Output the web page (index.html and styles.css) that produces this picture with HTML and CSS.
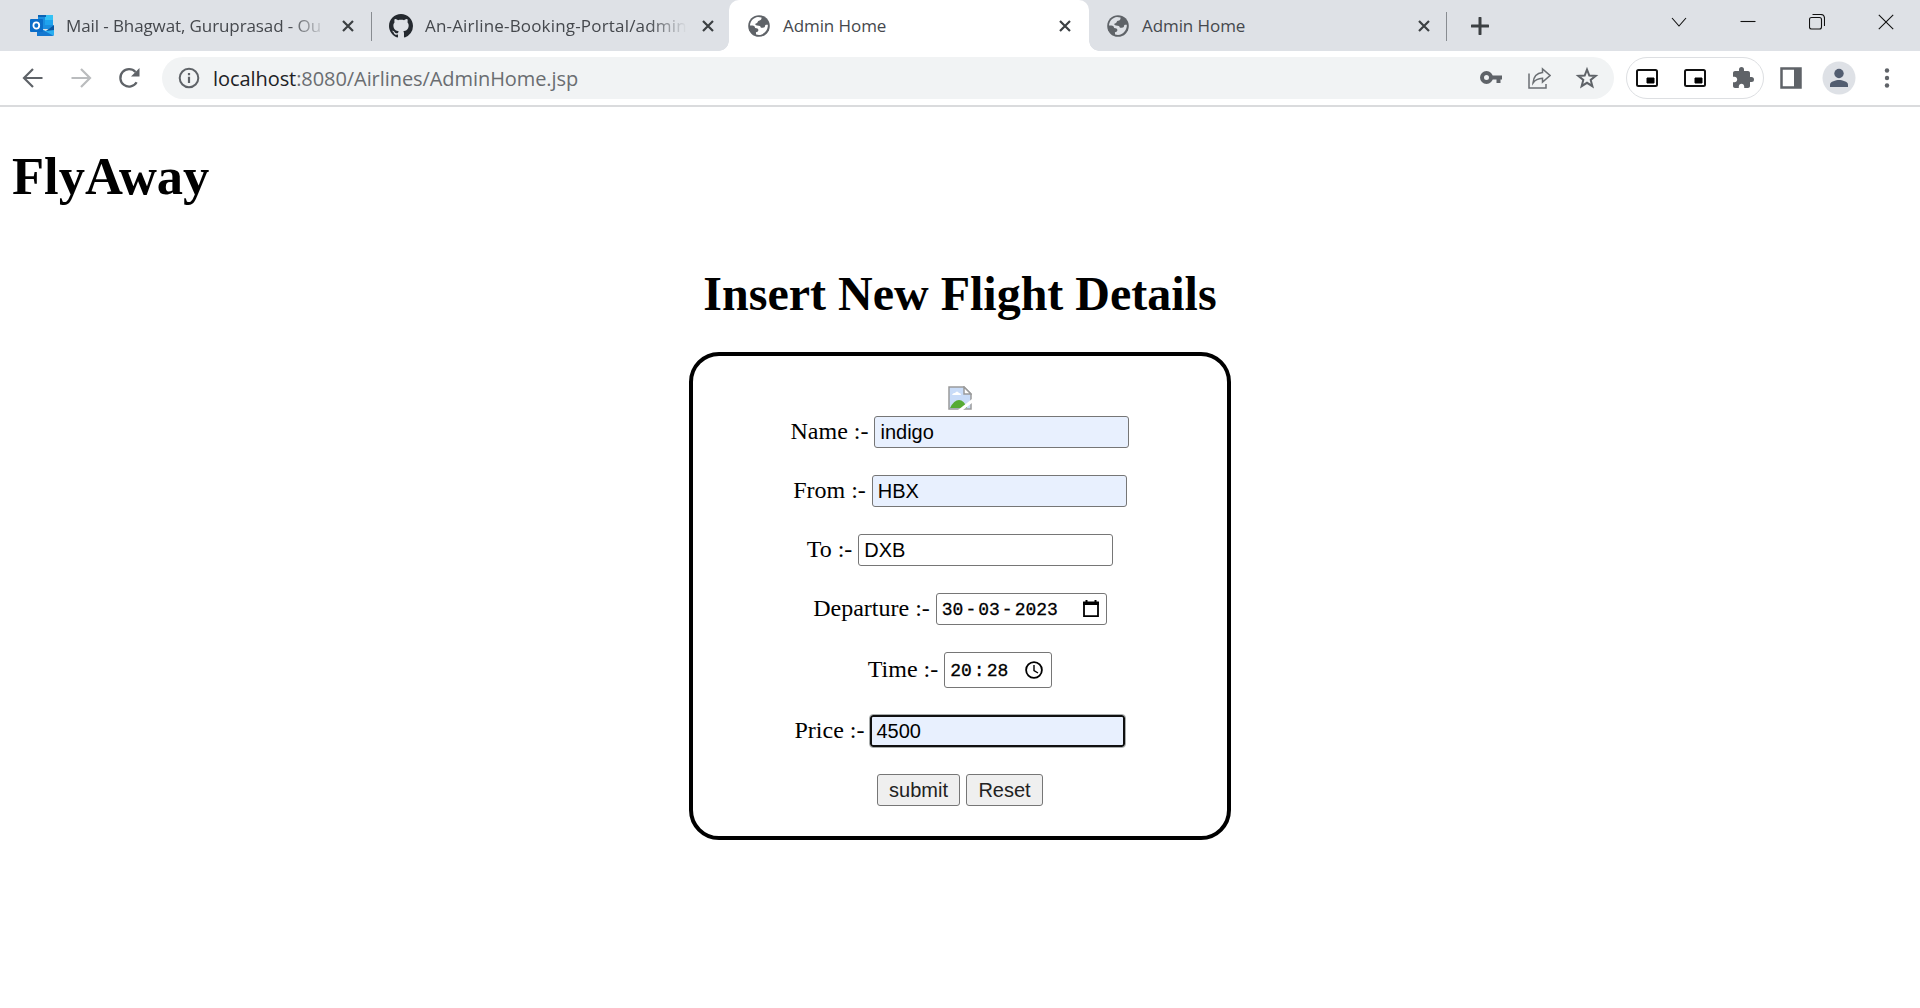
FILE: index.html
```
<!DOCTYPE html>
<html lang="en">
<head>
<meta charset="utf-8">
<title>Admin Home</title>
<link rel="stylesheet" href="styles.css">
</head>
<body>
<svg width="0" height="0" class="defs">
  <symbol id="x" viewBox="0 0 12 12"><path d="M1 1l10 10M11 1L1 11" stroke="#3c4043" stroke-width="2.2" fill="none"/></symbol>
  <symbol id="globe" viewBox="0 0 24 24"><circle cx="12" cy="12" r="10.800" fill="#5f6368"/><path d="M3 11.500C3.200 7.500 6.500 3.500 11 3.100l3.500.3c.3 2-.6 3-2.500 3.300-1.300.2-1.300 1.500-2 2.300-.6.700-1.700.4-1.700 1.300 0 .8.7 1.100 1.700 1.100 2.600 0 3.700.7 3.900 2.300h2c1.300 0 2.200-.8 2.200-2 0-.9 1-1.200 2.700-.9.500 4.800-3.500 10-8.800 10.200-1 0-2-.1-2.900-.4l-.2-2.400c1.700-.2 2.500-1 2.500-2.200 0-1.500-1.400-2-3.200-2.100-.5-1.600-1.400-2.400-2.700-2.400z" fill="currentColor"/></symbol>
  <symbol id="pip" viewBox="0 0 24 24"><rect x="2" y="4" width="20" height="16" rx="1.500" fill="none" stroke="#111" stroke-width="2"/><path d="M12 12h7v5h-7z" fill="#000" stroke="#000"/></symbol>
</svg>
<header class="tabs">
  <div class="tab first">
    <svg width="24" height="24" viewBox="0 0 24 24"><path d="M8 1h15v14H8z" fill="#1a8ee0"/><path d="M15 1h8v5h-8z" fill="#34c2f5"/><path d="M8 1h8v2H8z" fill="#0b64b5"/><path d="M15 6h8v5h-8z" fill="#1fa3ee"/><path d="M7 13l9 4 8-6v10.500H7z" fill="#2aaef0"/><path d="M7 13l17 9H7z" fill="#1478d0"/><path d="M24 11v5l-8 1z" fill="#0b55a0"/><rect y="5" width="13" height="13" rx="1" fill="#0a6dc9"/><ellipse cx="6.300" cy="11.500" rx="2.900" ry="3.200" fill="none" stroke="#fff" stroke-width="1.800"/></svg>
    <span class="title fade">Mail - Bhagwat, Guruprasad - Ou</span>
    <svg class="close" width="12" height="12"><use href="#x"/></svg>
  </div>
  <div class="tab second">
    <svg width="24" height="24" viewBox="0 0 16 16"><path fill="#24292f" d="M8 0C3.580 0 0 3.580 0 8c0 3.540 2.290 6.530 5.470 7.590.4.070.55-.17.55-.38 0-.19-.01-.82-.01-1.490-2.010.37-2.530-.49-2.690-.94-.09-.23-.48-.94-.82-1.130-.28-.15-.68-.52-.01-.53.63-.01 1.080.58 1.230.82.72 1.210 1.870.87 2.330.66.070-.52.28-.87.51-1.070-1.780-.2-3.640-.89-3.640-3.950 0-.87.31-1.590.82-2.150-.08-.2-.36-1.020.080-2.120 0 0 .67-.21 2.200.82.64-.18 1.320-.27 2-.27s1.360.09 2 .27c1.530-1.040 2.200-.82 2.200-.82.44 1.100.16 1.920.08 2.120.51.56.82 1.270.82 2.150 0 3.070-1.870 3.750-3.650 3.950.29.25.54.73.54 1.480 0 1.070-.01 1.930-.01 2.200 0 .21.15.46.55.38A8.010 8.010 0 0 0 16 8c0-4.420-3.580-8-8-8z"/></svg>
    <span class="title fade">An-Airline-Booking-Portal/admin</span>
    <svg class="close" width="12" height="12"><use href="#x"/></svg>
  </div>
  <div class="tab active">
    <svg class="globe" width="24" height="24"><use href="#globe"/></svg>
    <span class="title">Admin Home</span>
    <svg class="close" width="12" height="12"><use href="#x"/></svg>
  </div>
  <div class="tab last">
    <svg class="globe" width="24" height="24"><use href="#globe"/></svg>
    <span class="title">Admin Home</span>
    <svg class="close" width="12" height="12"><use href="#x"/></svg>
  </div>
  <svg class="plus" width="18" height="18" viewBox="0 0 18 18"><path d="M9 1v16M1 9h16" stroke="#3c4043" stroke-width="3" stroke-linecap="round"/></svg>
  <div class="window">
    <svg width="16" height="16" viewBox="0 0 16 16"><path d="M1 4l7 8 7-8"/></svg>
    <svg width="16" height="16" viewBox="0 0 16 16"><path d="M.5 7.500h15"/></svg>
    <svg width="16" height="16" viewBox="0 0 16 16"><rect x=".5" y="3.500" width="12" height="11.500" rx="2"/><path d="M3.500 .5h8q4 0 4 4v7.500"/></svg>
    <svg width="16" height="16" viewBox="0 0 16 16"><path d="M.8 .8l14.400 14.400M15.200 .8L.8 15.200"/></svg>
  </div>
</header>
<nav class="toolbar">
  <span class="cell"><svg width="24" height="24" viewBox="0 0 24 24"><path d="M21.500 12H3.500M12 3l-9 9 9 9" fill="none" stroke="#5f6368" stroke-width="2.200"/></svg></span>
  <span class="cell"><svg width="24" height="24" viewBox="0 0 24 24"><path d="M2.500 12h18M12 3l9 9-9 9" fill="none" stroke="#babcbe" stroke-width="2.200"/></svg></span>
  <span class="cell"><svg width="24" height="24" viewBox="0 0 24 24"><path d="M19.600 16.200A8.700 8.700 0 1 1 18.500 6" fill="none" stroke="#5f6368" stroke-width="2.300"/><path d="M22.500 2v8.500H14z" fill="#5f6368"/></svg></span>
  <div class="omnibox">
    <span class="cell"><svg width="22" height="22" viewBox="0 0 22 22"><circle cx="11" cy="11" r="9.300" fill="none" stroke="#5f6368" stroke-width="2"/><path d="M11 9.700v6.300M11 6v2.200" stroke="#5f6368" stroke-width="2.200"/></svg></span>
    <span class="url"><b>localhost</b>:8080/Airlines/AdminHome.jsp</span>
    <span class="cell"><svg width="24" height="24" viewBox="0 0 24 24"><circle cx="7.500" cy="11.500" r="4.500" fill="none" stroke="#5f6368" stroke-width="4"/><path d="M12 9.500h11v4h-1.500v3.500h-4v-3.500H12z" fill="#5f6368"/></svg></span>
    <span class="cell"><svg width="24" height="24" viewBox="0 0 24 24" fill="none" stroke="#6b6f73" stroke-width="1.500"><path d="M2 7.500v14.500h17v-4"/><path d="M6 17C6.500 10.500 10 7 15.500 6.500V3L23 9.500l-7.500 6.500v-3.700C11 12.500 8 14 6 17z"/></svg></span>
    <span class="cell"><svg width="24" height="24" viewBox="0 0 24 24"><path d="M12 3.500l2.300 6 6.400.4-5 4 1.700 6.300L12 16.800l-5.400 3.400 1.700-6.300-5-4 6.400-.4z" fill="none" stroke="#5f6368" stroke-width="2"/></svg></span>
  </div>
  <div class="extensions">
    <svg width="24" height="24"><use href="#pip"/></svg>
    <svg width="24" height="24"><use href="#pip"/></svg>
    <svg width="24" height="24" viewBox="0 0 24 24"><path fill="#5f6368" d="M20.500 11H19V7c0-1.100-.9-2-2-2h-4V3.500a2.500 2.500 0 0 0-5 0V5H4c-1.100 0-1.990.9-1.990 2v3.800H3.500c1.490 0 2.700 1.210 2.700 2.700s-1.210 2.700-2.700 2.700H2V20c0 1.100.9 2 2 2h3.800v-1.500c0-1.490 1.210-2.700 2.700-2.700s2.700 1.210 2.700 2.700V22H17c1.100 0 2-.9 2-2v-4h1.500a2.500 2.500 0 0 0 0-5z"/></svg>
  </div>
  <span class="cell"><svg width="22" height="22" viewBox="0 0 22 22"><path d="M1.500 1.500h19v19h-19z" fill="none" stroke="#5f6368" stroke-width="2.500"/><path d="M14 1h7v20h-7z" fill="#5f6368"/></svg></span>
  <span class="cell"><svg width="34" height="34" viewBox="0 0 34 34"><circle cx="17" cy="17" r="16.500" fill="#dee1e6"/><circle cx="17" cy="12.500" r="4.700" fill="#525d70"/><path d="M8 26v-2.500c0-3 6-4.500 9-4.500s9 1.500 9 4.500V26z" fill="#525d70"/></svg></span>
  <span class="cell"><svg width="24" height="24" viewBox="0 0 24 24" fill="#5f6368"><circle cx="12" cy="4.500" r="2.200"/><circle cx="12" cy="12" r="2.200"/><circle cx="12" cy="19.500" r="2.200"/></svg></span>
</nav>
<main>
  <h1 class="brand">FlyAway</h1>
  <h2 class="heading">Insert New Flight Details</h2>
  <form class="card">
    <svg class="broken" width="24" height="24" viewBox="0 0 24 24"><path d="M1 1h15l7 7v15H1z" fill="#c9dcf8" stroke="#9a9a9a" stroke-width="1.500"/><path d="M4 9q1-2.500 3-2 2-3 4 0 2 0 2 2z" fill="#fff"/><path d="M2 22q4-8 9-8 5 0 8 8z" fill="#56ab35"/><path d="M16 1v7h7z" fill="#fff" stroke="#9a9a9a" stroke-width="1.500"/><path d="M24 13L10 24h5l9-7z" fill="#fff"/></svg>
    <div class="row"><label>Name :-</label><input class="field filled" value="indigo"></div>
    <div class="row"><label>From :-</label><input class="field filled" value="HBX"></div>
    <div class="row"><label>To :-</label><input class="field" value="DXB"></div>
    <div class="row"><label>Departure :-</label><span class="picker date"><span>30<i>-</i>03<i>-</i>2023</span><svg width="18" height="20" viewBox="0 0 18 20"><path d="M2 3.500h14v13.700H2z" fill="none" stroke="#000" stroke-width="1.800"/><path d="M1 3h16v3H1zM3.500 1h2v3h-2zM12.500 1h2v3h-2z"/></svg></span></div>
    <div class="row"><label>Time :-</label><span class="picker time"><span>20<i>:</i>28</span><svg width="18" height="18" viewBox="0 0 18 18" fill="none" stroke="#000"><circle cx="9" cy="9" r="7.900" stroke-width="1.800"/><path d="M9 4v5.500l4 2.500" stroke-width="1.400"/></svg></span></div>
    <div class="row"><label>Price :-</label><input class="field filled focused" value="4500"></div>
    <div class="row"><button type="button" class="submit">submit</button><button type="button" class="reset">Reset</button></div>
  </form>
</main>
</body>
</html>
```
FILE: styles.css
```
* { box-sizing: border-box; }
body { margin: 0; background: #fff; color: #000; font-family: "Liberation Serif", "Times New Roman", serif; height: 1008px; overflow: hidden; }
svg { display: block; flex: none; }
.defs { position: absolute; }

.tabs { display: flex; align-items: center; height: 51px; background: #dee1e6; font-family: "Open Sans", sans-serif; }
.tab { display: flex; align-items: center; height: 51px; position: relative; }
.title { flex: 1; margin-left: 12px; font-size: 17px; letter-spacing: -0.08px; color: #45484d; white-space: nowrap; }
.fade { -webkit-mask-image: linear-gradient(to right, #000 calc(100% - 38px), transparent); mask-image: linear-gradient(to right, #000 calc(100% - 38px), transparent); }
.close { margin-left: 15px; }
.first { width: 372px; padding: 0 18px 0 30px; }
.first .title { letter-spacing: -0.1px; }
.second { width: 357px; padding: 0 17px; }
.second .title { letter-spacing: 0.18px; }
.active { width: 360px; padding: 0 18px; background: #fff; border-radius: 10px 10px 0 0; }
.last { width: 358px; padding: 0 17px 0 17px; }
.globe { color: #dee1e6; }
.active .globe { color: #fff; }
.first::after, .last::after { content: ""; position: absolute; right: 0; top: 12px; width: 1px; height: 29px; background: #888c91; }
.active::before, .active::after { content: ""; position: absolute; bottom: 0; width: 10px; height: 10px; }
.active::before { left: -10px; background: radial-gradient(circle at 0 0, transparent 9.5px, #fff 10px); }
.active::after { right: -10px; background: radial-gradient(circle at 100% 0, transparent 9.5px, #fff 10px); }
.plus { margin-left: 24px; }
.window { display: flex; gap: 53px; margin: -8px 26px 0 auto; }
.window svg { fill: none; stroke: #111; stroke-width: 1.1; }

.toolbar { display: flex; align-items: center; height: 56px; border-bottom: 2px solid #dadbdd; padding: 0 9px; }
.cell { display: flex; justify-content: center; align-items: center; width: 48px; height: 42px; flex: none; }
.omnibox { display: flex; align-items: center; width: 1452px; height: 42px; margin-left: 9px; padding: 0 3px; border-radius: 21px; background: #f1f3f4; }
.url { flex: 1; color: #6a6d71; font: 20px "Open Sans", sans-serif; letter-spacing: -0.07px; white-space: nowrap; }
.url b { font-weight: 400; color: #202124; }
.extensions { display: flex; align-items: center; gap: 24px; width: 138px; height: 42px; margin: 0 3px 0 12px; padding-left: 8px; border: 1px solid #dddfe2; border-radius: 21px; }

main { padding: 0 12px; }
.brand { margin: 39px 0 0; font-size: 52.5px; line-height: 60px; }
.heading { margin: 60px 0 0; font-size: 48px; line-height: 56px; text-align: center; }
.card { width: 542px; height: 488px; margin: 30px auto 0; padding-top: 30px; border: 4px solid #000; border-radius: 30px; display: flex; flex-direction: column; align-items: center; gap: 27px; }
.broken { margin-bottom: -21px; }
.row { display: flex; justify-content: center; align-items: center; gap: 6px; font-size: 24px; }
.row label { line-height: 30px; margin-top: -2px; }
.field { width: 255px; height: 32px; padding: 0 5px; border: 1px solid #767676; border-radius: 3px; background: #fff; color: #000; font: 20px "Liberation Sans", Arial, sans-serif; outline: none; }
.filled { background: #e8f0fe; }
.focused { border: 2px solid #101010; padding: 0 4px; outline: 1px solid #a9adad; outline-offset: -0.5px; }
.picker { display: flex; justify-content: space-between; align-items: center; height: 32px; padding: 0 6px 0 5px; border: 1px solid #767676; border-radius: 3px; font: 18px "Liberation Mono", monospace; line-height: 22px; }
.picker span { padding-top: 2px; -webkit-text-stroke: 0.3px #000; }
.picker i { font-style: normal; padding: 0 2px; }
.date { width: 171px; }
.time { width: 108px; height: 36px; padding-right: 8px; }
button { height: 32px; padding: 0; border: 1px solid #767676; border-radius: 3px; background: #efefef; color: #222; font: 20px "Liberation Sans", Arial, sans-serif; }
.submit { width: 83px; }
.reset { width: 77px; }
```
